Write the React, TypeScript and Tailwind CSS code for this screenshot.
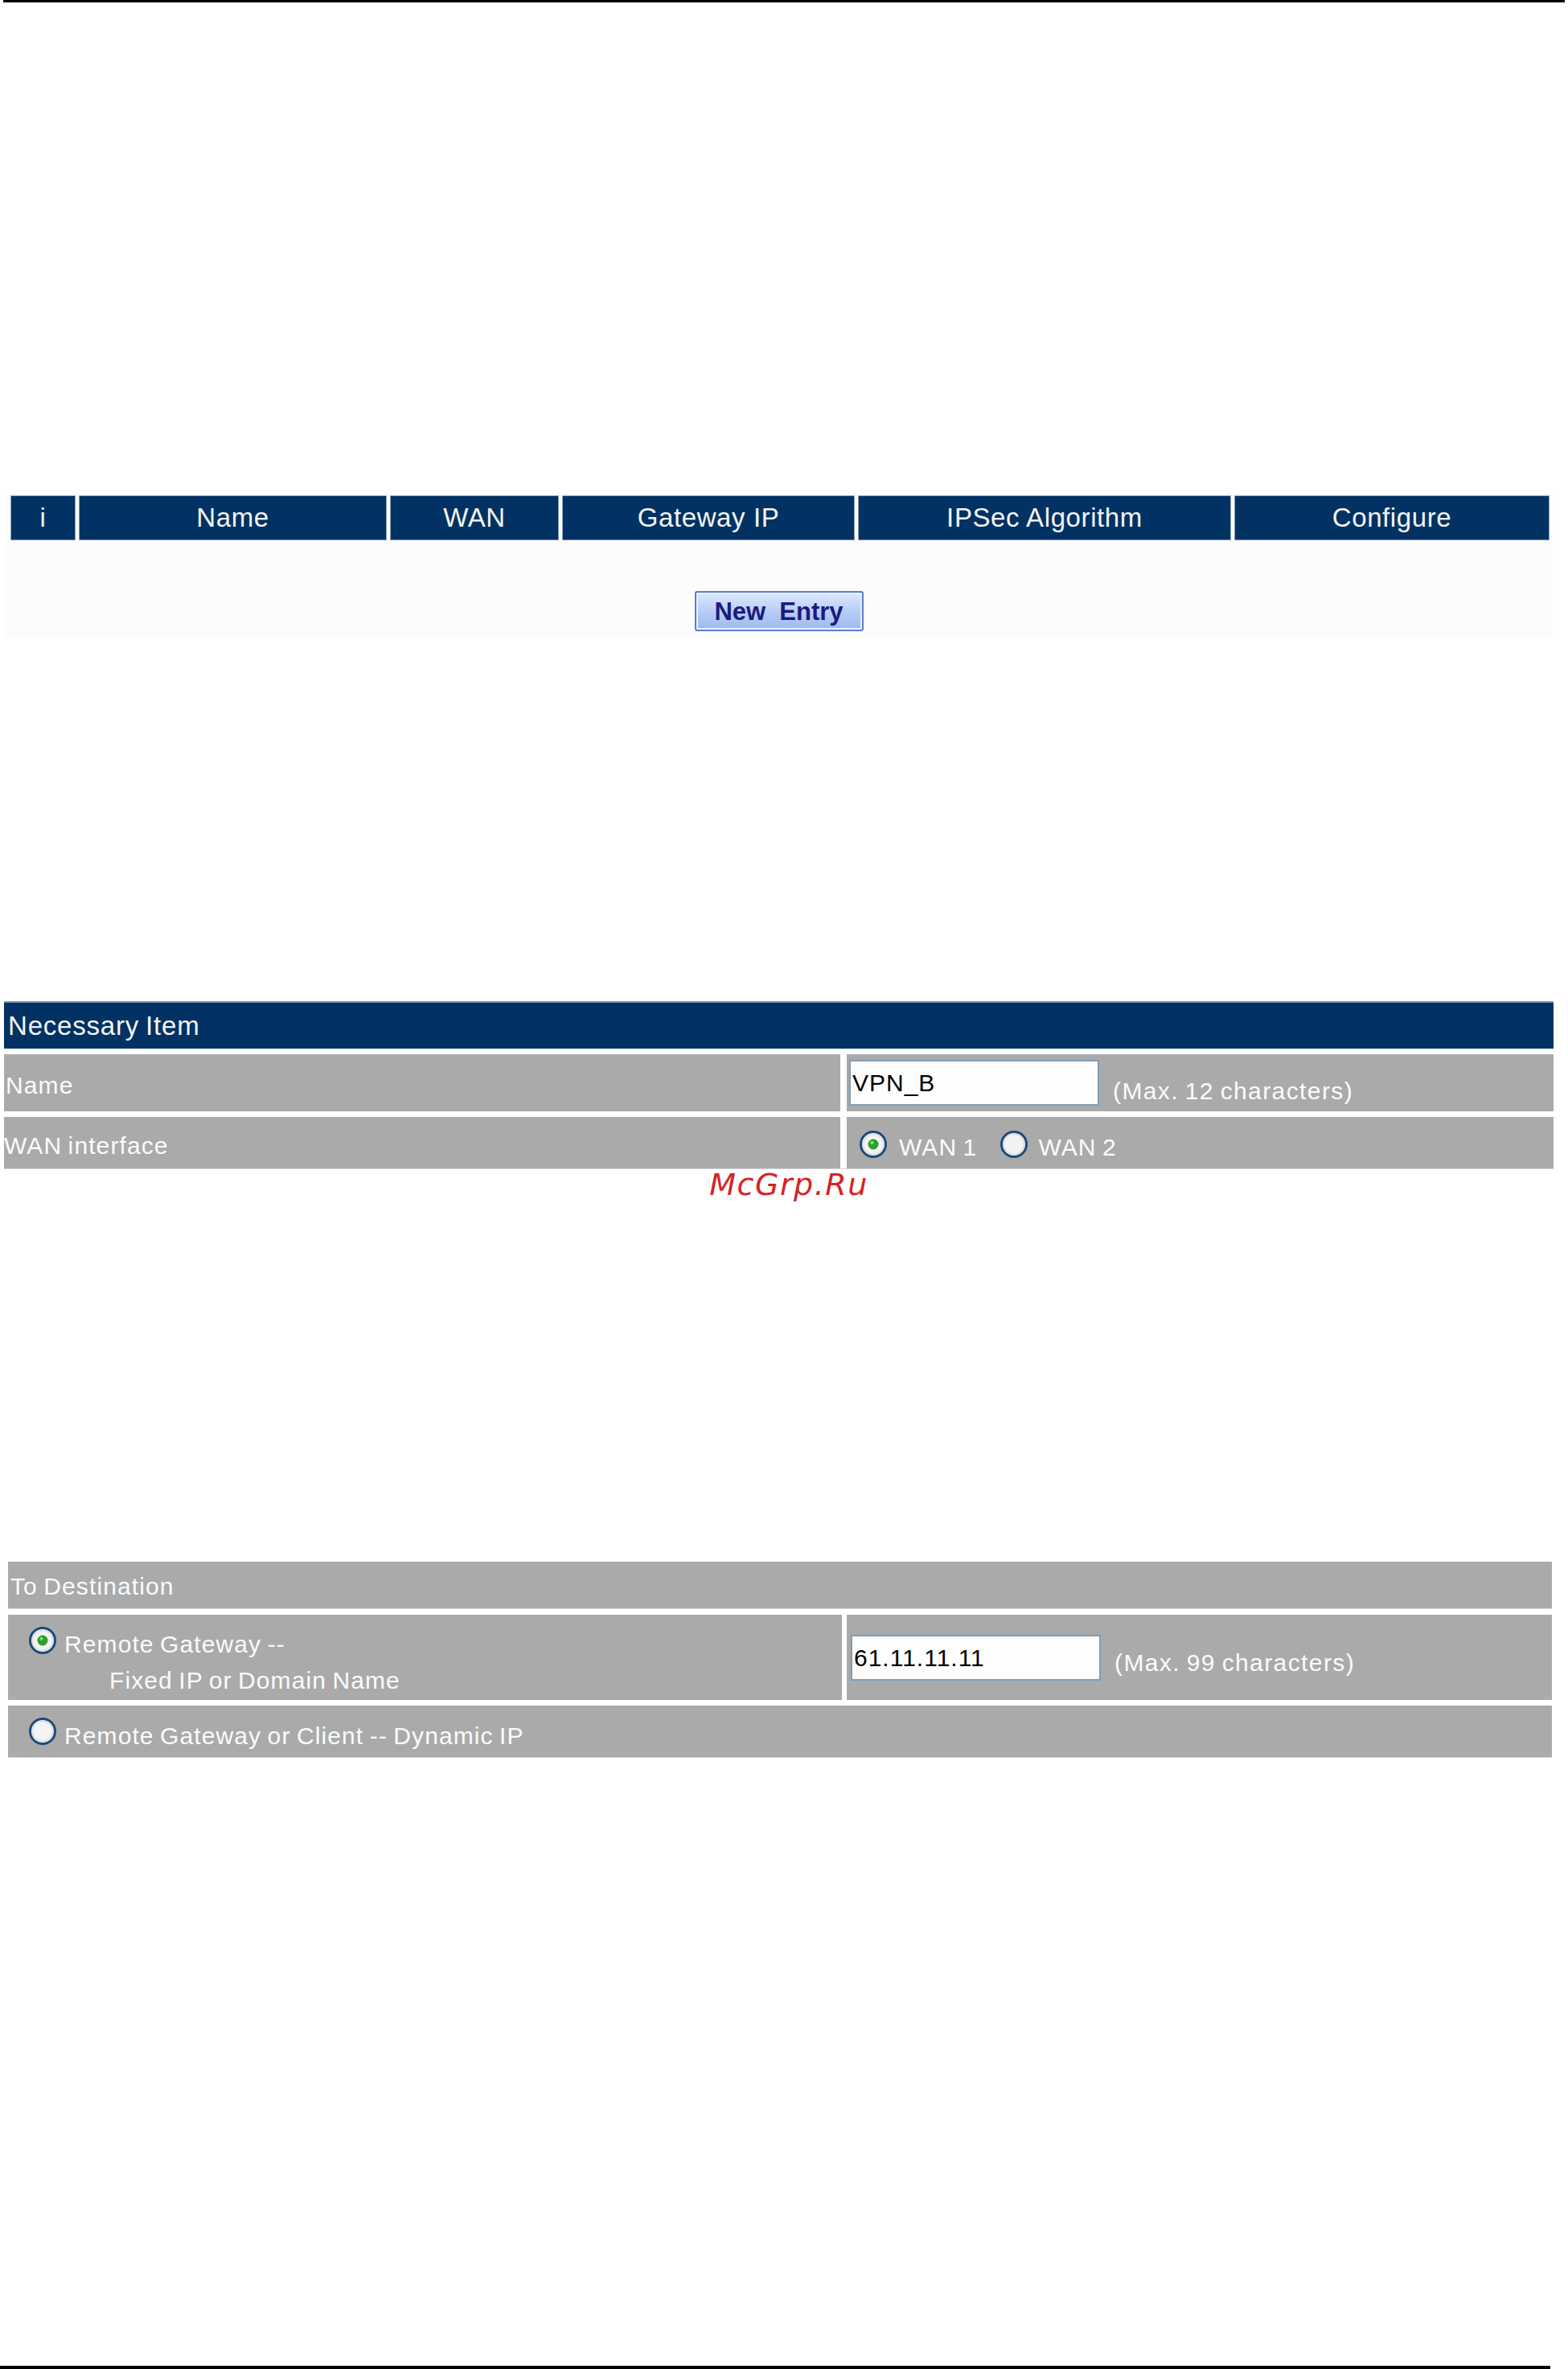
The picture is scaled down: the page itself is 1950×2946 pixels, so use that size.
import React from "react";

const FONT = { fontFamily: '"Liberation Sans", Arial, sans-serif' };

function Radio({ checked }: { checked?: boolean }) {
  return (
    <svg width="36" height="36" viewBox="0 0 36 36" className="shrink-0">
      <circle cx="18" cy="18" r="15.5" fill="#f3f3f3" stroke="#1d4a78" strokeWidth="3" />
      <circle cx="18" cy="18" r="12.5" fill="none" stroke="#d9dde3" strokeWidth="1.5" />
      {checked && (
        <>
          <circle cx="18" cy="18" r="6.5" fill="#2a9f2a" />
          <circle cx="16.5" cy="16" r="2.2" fill="#7fd67f" />
        </>
      )}
    </svg>
  );
}

function TextBox({ value }: { value: string }) {
  return (
    <div className="w-[311px] h-[57px] bg-[#fdfdfd] border-2 border-[#7f9db9] flex items-center pl-[2px] text-[30px] tracking-[1px] text-black shrink-0">
      {value}
    </div>
  );
}

const headCols: { label: string; w: string }[] = [
  { label: "i", w: "w-[81px]" },
  { label: "Name", w: "w-[383px]" },
  { label: "WAN", w: "w-[210px]" },
  { label: "Gateway IP", w: "w-[364px]" },
  { label: "IPSec Algorithm", w: "w-[464px]" },
  { label: "Configure", w: "w-[392px]" },
];

export default function App() {
  return (
    <div className="w-[1950px] h-[2946px] bg-white flex flex-col" style={FONT}>
      {/* page rule */}
      <div className="ml-[4px] w-[1942px] h-[3px] bg-black" />

      {/* tunnel list */}
      <div className="ml-[6px] mt-[613px] w-[1925px] bg-[#fcfcfc] flex flex-col">
        <div className="flex gap-[4px] pl-[7px]">
          {headCols.map((c) => (
            <div
              key={c.label}
              className={`${c.w} h-[56px] bg-[#013263] border border-[#8ea4be] flex items-center justify-center text-[33px] tracking-[0.6px] text-[#f4f4f4]`}
            >
              {c.label}
            </div>
          ))}
        </div>
        <div className="flex justify-center pt-[63px] pb-[8px]">
          <button className="w-[210px] h-[50px] rounded-[3px] border-2 border-[#5a7fd0] bg-gradient-to-b from-[#dfe9ff] via-[#b8cdf6] to-[#9fb9ef] shadow-[inset_0_0_0_2px_#eaf1ff] flex items-center justify-center text-[31px] font-bold text-[#1c1a7e] whitespace-pre leading-none">
            {"New  Entry"}
          </button>
        </div>
      </div>

      {/* necessary item */}
      <div className="ml-[5px] mt-[452px] w-[1927px] flex flex-col text-[30px] tracking-[1.1px] [word-spacing:-2px] text-[#fbfbfb]">
        <div className="h-[59px] bg-[#013263] border-t-2 border-[#8196b0] flex items-center pl-[5px] text-[33px] tracking-[0.8px] text-[#f4f4f4]">
          Necessary Item
        </div>
        <div className="mt-[7px] h-[71px] flex gap-[8px]">
          <div className="w-[1040px] bg-[#aaaaaa] flex items-center pl-[2px] pt-[6px]">Name</div>
          <div className="flex-1 bg-[#aaaaaa] flex items-start pl-[3px] pt-[7px]">
            <TextBox value="VPN_B" />
            <span className="ml-[17px] mt-[16px] tracking-[1.4px]">(Max. 12 characters)</span>
          </div>
        </div>
        <div className="mt-[7px] h-[65px] flex gap-[8px] border-b border-[#d6d6d6]">
          <div className="w-[1040px] bg-[#aaaaaa] flex items-center pl-[0px] pt-[6px]">WAN interface</div>
          <div className="flex-1 bg-[#aaaaaa] flex items-center pl-[15px]">
            <span className="mt-[3px]">
              <Radio checked />
            </span>
            <span className="ml-[14px] mt-[10px]">WAN 1</span>
            <span className="ml-[28px] mt-[3px]">
              <Radio />
            </span>
            <span className="ml-[12px] mt-[10px]">WAN 2</span>
          </div>
        </div>
      </div>

      {/* watermark */}
      <div className="flex justify-center pl-[12px]">
        <span
          className="italic text-[38px] leading-[38px] tracking-[1.5px] text-[#d42424]"
          style={{ fontFamily: '"DejaVu Sans", sans-serif' }}
        >
          McGrp.Ru
        </span>
      </div>

      {/* destination */}
      <div className="ml-[10px] mt-[450px] w-[1920px] flex flex-col text-[30px] tracking-[1.1px] [word-spacing:-2px] text-[#fbfbfb]">
        <div className="h-[59px] bg-[#aaaaaa] border-b border-[#d6d6d6] flex items-center pl-[3px] pt-[2px]">To Destination</div>
        <div className="mt-[7px] h-[106px] flex gap-[6px]">
          <div className="w-[1037px] bg-[#aaaaaa] flex items-start pl-[25px] pt-[14px]">
            <Radio checked />
            <div className="ml-[9px] flex flex-col leading-[45px]">
              <span>Remote Gateway --</span>
              <span className="ml-[56px]">Fixed IP or Domain Name</span>
            </div>
          </div>
          <div className="flex-1 bg-[#aaaaaa] flex items-center pl-[5px]">
            <TextBox value="61.11.11.11" />
            <span className="ml-[17px] mt-[12px] tracking-[1.4px]">(Max. 99 characters)</span>
          </div>
        </div>
        <div className="mt-[7px] h-[65px] bg-[#aaaaaa] border-b border-[#d6d6d6] flex items-center pl-[25px]">
          <Radio />
          <span className="ml-[9px] mt-[10px]">Remote Gateway or Client -- Dynamic IP</span>
        </div>
      </div>

      {/* page rule */}
      <div className="mt-auto w-[1928px] h-[4px] bg-black" />
    </div>
  );
}
